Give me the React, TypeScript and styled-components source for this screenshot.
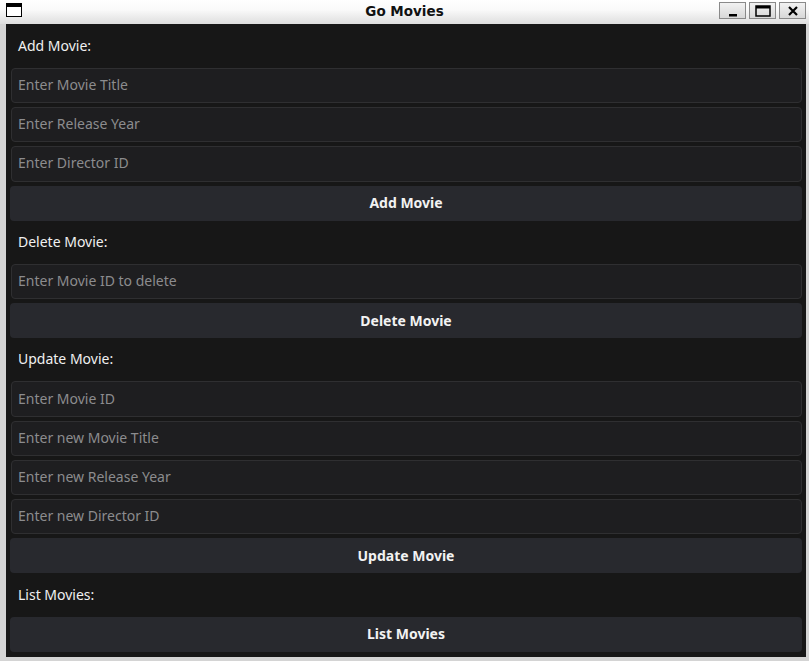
import React from "react";
import styled, { createGlobalStyle } from "styled-components";

const Global = createGlobalStyle`
  html, body { margin: 0; padding: 0; background: #d4d4d4; }
  body { width: 809px; height: 661px; overflow: hidden; }
  * { box-sizing: border-box; }
`;

const Window = styled.div`
  width: 809px;
  height: 661px;
  display: flex;
  flex-direction: column;
  background: #d4d4d4;
`;

const TitleBar = styled.div`
  height: 24px;
  flex: none;
  display: flex;
  align-items: center;
  padding: 0 3px 0 6px;
  background: linear-gradient(#ffffff, #fafafa 40%, #dedede);
  position: relative;
`;

const WinIcon = styled.div`
  width: 16px;
  height: 14px;
  border: 1.5px solid #000;
  border-top-width: 4px;
  background: #fff;
  margin-top: -4px;
`;

const Title = styled.div`
  position: absolute;
  left: 0;
  right: 0;
  top: 2.5px;
  text-align: center;
  font-family: "DejaVu Sans", sans-serif;
  font-weight: bold;
  font-size: 13.5px;
  color: #111;
  pointer-events: none;
`;

const Controls = styled.div`
  margin-left: auto;
  display: flex;
  gap: 3px;
  margin-top: -3px;
`;

const CtlButton = styled.div`
  width: 27px;
  height: 17px;
  border: 1px solid #8a8a8a;
  background: linear-gradient(#f2f2f2, #d8d8d8);
  display: flex;
  align-items: center;
  justify-content: center;
`;

const Frame = styled.div`
  flex: 1;
  padding: 0 3px 4px 6px;
  display: flex;
  min-height: 0;
`;

const Content = styled.div`
  flex: 1;
  background: #171717;
  padding: 4.8px 4px 4px 5px;
  display: flex;
  flex-direction: column;
  gap: 4px;
  font-family: "Noto Sans", sans-serif;
  font-size: 14px;
`;

const Label = styled.div`
  height: 35.2px;
  flex: none;
  display: flex;
  align-items: center;
  padding: 0 0 2px 7px;
  color: #f0f0f0;
`;

const Input = styled.input`
  height: 35.2px;
  flex: none;
  width: 100%;
  background: #1e1e20;
  border: 1px solid #2f2f31;
  border-radius: 4px;
  padding: 0 0 2px 6px;
  font-family: "Noto Sans", sans-serif;
  font-size: 14px;
  color: #eee;
  outline: none;
  &::placeholder { color: #8c8c8e; }
`;

const Button = styled.button`
  height: 35.2px;
  flex: none;
  background: #28292e;
  border: none;
  border-radius: 4px;
  font-family: "Noto Sans", sans-serif;
  font-weight: bold;
  font-size: 14px;
  color: #f2f2f2;
  padding: 0 0 1px 0;
  margin-left: -1px;
  width: calc(100% + 1px);
`;

const Icon = ({ kind }: { kind: "min" | "max" | "close" }) => {
  if (kind === "min")
    return (
      <svg width="12" height="12" viewBox="0 0 12 12">
        <rect x="2" y="9" width="8" height="2.5" fill="#000" />
      </svg>
    );
  if (kind === "max")
    return (
      <svg width="16" height="12" viewBox="0 0 16 12">
        <rect x="1" y="1" width="14" height="10" fill="none" stroke="#000" strokeWidth="1.5" />
        <rect x="1" y="1" width="14" height="2.5" fill="#000" />
      </svg>
    );
  return (
    <svg width="12" height="12" viewBox="0 0 12 12">
      <path d="M2 2 L10 10 M10 2 L2 10" stroke="#000" strokeWidth="2.2" />
    </svg>
  );
};

export default function App() {
  return (
    <Window>
      <Global />
      <TitleBar>
        <WinIcon />
        <Title>Go Movies</Title>
        <Controls>
          <CtlButton><Icon kind="min" /></CtlButton>
          <CtlButton><Icon kind="max" /></CtlButton>
          <CtlButton><Icon kind="close" /></CtlButton>
        </Controls>
      </TitleBar>
      <Frame>
        <Content>
          <Label>Add Movie:</Label>
          <Input placeholder="Enter Movie Title" />
          <Input placeholder="Enter Release Year" />
          <Input placeholder="Enter Director ID" />
          <Button>Add Movie</Button>
          <Label>Delete Movie:</Label>
          <Input placeholder="Enter Movie ID to delete" />
          <Button>Delete Movie</Button>
          <Label>Update Movie:</Label>
          <Input placeholder="Enter Movie ID" />
          <Input placeholder="Enter new Movie Title" />
          <Input placeholder="Enter new Release Year" />
          <Input placeholder="Enter new Director ID" />
          <Button>Update Movie</Button>
          <Label>List Movies:</Label>
          <Button>List Movies</Button>
        </Content>
      </Frame>
    </Window>
  );
}
